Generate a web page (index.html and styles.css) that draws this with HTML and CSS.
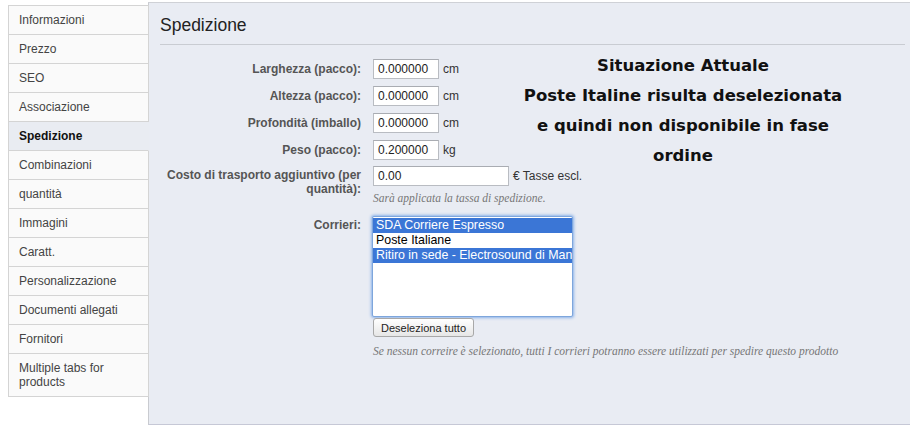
FILE: index.html
```html
<!DOCTYPE html>
<html lang="it">
<head>
<meta charset="utf-8">
<title>Spedizione</title>
<link rel="stylesheet" href="styles.css">
</head>
<body>
<div class="page">
  <ul class="tabs">
    <li class="tab">Informazioni</li>
    <li class="tab">Prezzo</li>
    <li class="tab">SEO</li>
    <li class="tab">Associazione</li>
    <li class="tab active">Spedizione</li>
    <li class="tab">Combinazioni</li>
    <li class="tab">quantità</li>
    <li class="tab">Immagini</li>
    <li class="tab">Caratt.</li>
    <li class="tab">Personalizzazione</li>
    <li class="tab">Documenti allegati</li>
    <li class="tab">Fornitori</li>
    <li class="tab">Multiple tabs for products</li>
  </ul>
  <div class="panel">
    <h2 class="title">Spedizione</h2>
    <div class="top">
      <div class="dims">
        <div class="row">
          <label class="lbl">Larghezza (pacco):</label>
          <div class="field"><span class="input small">0.000000</span><span class="unit">cm</span></div>
        </div>
        <div class="row">
          <label class="lbl">Altezza (pacco):</label>
          <div class="field"><span class="input small">0.000000</span><span class="unit">cm</span></div>
        </div>
        <div class="row">
          <label class="lbl">Profondità (imballo)</label>
          <div class="field"><span class="input small">0.000000</span><span class="unit">cm</span></div>
        </div>
        <div class="row">
          <label class="lbl">Peso (pacco):</label>
          <div class="field"><span class="input small">0.200000</span><span class="unit">kg</span></div>
        </div>
      </div>
      <div class="info">
        <p>Situazione Attuale</p>
        <p>Poste Italine risulta deselezionata</p>
        <p>e quindi non disponibile in fase</p>
        <p>ordine</p>
      </div>
    </div>
    <div class="row cost">
      <label class="lbl">Costo di trasporto aggiuntivo (per quantità):</label>
      <div class="field col">
        <div class="line"><span class="input wide">0.00</span><span class="unit">€ Tasse escl.</span></div>
        <p class="hint">Sarà applicata la tassa di spedizione.</p>
      </div>
    </div>
    <div class="row carriers">
      <label class="lbl">Corrieri:</label>
      <div class="field col">
        <div class="listbox" role="listbox">
          <div class="opt sel">SDA Corriere Espresso</div>
          <div class="opt">Poste Italiane</div>
          <div class="opt sel">Ritiro in sede - Electrosound di Mangano</div>
        </div>
        <button class="btn" type="button">Deseleziona tutto</button>
        <p class="hint bottom">Se nessun correire è selezionato, tutti I corrieri potranno essere utilizzati per spedire questo prodotto</p>
      </div>
    </div>
  </div>
</div>
</body>
</html>
```

FILE: styles.css
```css
* { box-sizing: border-box; }
html, body { margin: 0; padding: 0; background: #ffffff; }
body {
  font-family: "Liberation Sans", Arial, sans-serif;
  font-size: 12px;
  color: #333;
  width: 910px;
  height: 440px;
  overflow: hidden;
}
.page {
  display: flex;
  align-items: flex-start;
  padding-left: 8px;
}
.tabs {
  list-style: none;
  margin: 5px -1px 0 0;
  padding: 0;
  width: 141px;
  flex: none;
  position: relative;
  z-index: 1;
}
.tab {
  padding: 7px 10px;
  line-height: 14px;
  background: #fafafa;
  border: 1px solid #d4d4d4;
  border-top: none;
  color: #444;
}
.tab:first-child { border-top: 1px solid #d4d4d4; }
.tab.active {
  background: #e9ecf2;
  border-right-color: #e9ecf2;
  font-weight: bold;
  color: #111;
}
.panel {
  flex: 1;
  margin-top: 2px;
  height: 423px;
  background: #e9ecf3;
  border-top: 1px solid #cfd1d6;
  border-left: 1px solid #c9cbd0;
  border-bottom: 1px solid #c6c8d6;
  padding: 0 5px 0 11px;
}
.title {
  margin: 0;
  padding: 12px 0 9px 0;
  font-size: 17.5px;
  line-height: 20px;
  font-weight: normal;
  color: #222;
  border-bottom: 1px solid #c9ccd2;
}
.top {
  display: flex;
  align-items: flex-start;
  margin-top: 4px;
}
.dims {
  width: 301px;
  flex: none;
  padding-top: 10px;
  display: flex;
  flex-direction: column;
  gap: 7px;
}
.row {
  display: grid;
  grid-template-columns: 201px auto;
  column-gap: 12px;
  align-items: start;
}
.lbl {
  text-align: right;
  font-weight: bold;
  color: #555;
  line-height: 14px;
  padding-top: 3px;
}
.field { display: flex; align-items: center; }
.field.col { flex-direction: column; align-items: flex-start; }
.line { display: flex; align-items: center; }
.input {
  display: block;
  height: 20px;
  line-height: 18px;
  background: #fff;
  border: 1px solid #b9bcc2;
  border-top-color: #a9acb2;
  padding: 0 4px;
  color: #222;
  font-size: 12px;
}
.input.small { width: 66px; }
.input.wide { width: 136px; }
.unit { margin-left: 4px; color: #333; }
.info {
  flex: 1;
  text-align: center;
  font-family: "DejaVu Sans", Verdana, sans-serif;
  font-weight: bold;
  font-size: 16.5px;
  line-height: 30px;
  color: #111;
  margin-top: 2px;
  margin-bottom: -11px;
}
.info p { margin: 0; }
.cost { margin-top: 6px; }
.cost .lbl { padding-top: 2px; }
.hint {
  margin: 5px 0 0 0;
  font-family: "Liberation Serif", Georgia, serif;
  font-style: italic;
  font-size: 11.5px;
  line-height: 14px;
  color: #777;
}
.carriers { margin-top: 11px; }
.carriers .lbl { padding-top: 2px; }
.listbox {
  margin-left: -1px;
  width: 201px;
  height: 101px;
  background: #fff;
  border: 1px solid #7ea6dc;
  box-shadow: 0 0 3px 1px #8ab2ea;
  border-radius: 2px;
  padding-top: 1px;
  overflow: hidden;
}
.opt {
  height: 15px;
  line-height: 15px;
  padding-left: 3px;
  white-space: nowrap;
  overflow: hidden;
  color: #000;
  font-size: 12.4px;
}
.opt.sel { background: #3b76d6; color: #fff; }
.btn {
  margin-top: 1px;
  height: 19px;
  padding: 0 7px;
  font-family: "Liberation Sans", Arial, sans-serif;
  font-size: 11px;
  color: #222;
  background: linear-gradient(#ffffff, #e6e6e6);
  border: 1px solid #a8a8a8;
  border-radius: 3px;
}
.hint.bottom { margin-top: 7px; white-space: nowrap; }
```
